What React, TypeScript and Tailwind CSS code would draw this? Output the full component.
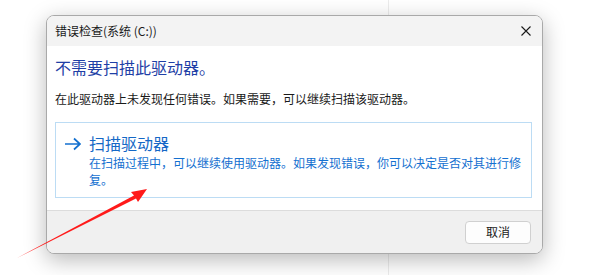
import React from 'react';

const font = { fontFamily: '"Noto Sans CJK SC", "Noto Sans", sans-serif' };

export default function App() {
  return (
    <div className="relative w-[600px] h-[275px] bg-white overflow-hidden" style={font}>
      {/* faint background divider */}
      <div className="absolute left-[388px] top-0 w-px h-full bg-[#ececec]" />

      <div className="relative pl-[46px] pt-[15px]">
        <div className="w-[497px] h-[239px] flex flex-col rounded-[8px] border border-[#a9a9a9] bg-white overflow-hidden shadow-[0_6px_22px_rgba(0,0,0,0.28)]">
          {/* title bar */}
          <div className="h-[30px] flex items-center justify-between bg-[#f3f3f3] pl-[8px] pr-[8px]">
            <span className="text-[12px] text-[#1a1a1a] leading-none">错误检查(系统 (C:))</span>
            <svg width="12" height="12" viewBox="0 0 12 12" className="mr-[2px]">
              <path d="M1.5 1.5 L10.5 10.5 M10.5 1.5 L1.5 10.5" stroke="#1a1a1a" strokeWidth="1.1" />
            </svg>
          </div>

          {/* content */}
          <div className="flex-1 bg-white pl-[8px] pr-[10px] pt-[10px]">
            <div className="text-[16px] leading-[22px] text-[#1f3fa6]">不需要扫描此驱动器。</div>
            <div className="mt-[13px] text-[12px] leading-[16px] text-[#1a1a1a]">
              在此驱动器上未发现任何错误。如果需要，可以继续扫描该驱动器。
            </div>
            <div className="mt-[15px] h-[76px] border border-[#bcdcf4] flex pl-[8px] pt-[9px] pr-[6px]">
              <svg width="18" height="14" viewBox="0 0 18 14" className="mt-[5px] shrink-0">
                <path d="M1 7 H16 M10 1.5 L16 7 L10 12.5" stroke="#1470cf" strokeWidth="1.7" fill="none" />
              </svg>
              <div className="ml-[7px] flex flex-col">
                <div className="text-[16px] leading-[22px] text-[#1468c6]">扫描驱动器</div>
                <div className="text-[12px] leading-[17px] text-[#1470d0] w-[436px]">
                  在扫描过程中，可以继续使用驱动器。如果发现错误，你可以决定是否对其进行修复。
                </div>
              </div>
            </div>
          </div>

          {/* footer */}
          <div className="h-[43px] bg-[#f0f0f0] border-t border-[#dcdcdc] flex items-center justify-end pr-[11px]">
            <button className="w-[66px] h-[23px] rounded-[4px] border border-[#d0d0d0] bg-[#fdfdfd] text-[12px] text-[#1a1a1a] leading-none">
              取消
            </button>
          </div>
        </div>
      </div>

      {/* red annotation arrow */}
      <svg className="absolute left-0 top-0" width="600" height="275" viewBox="0 0 600 275">
        <polygon points="17,258 134,195.5 131,192 147,189 138,202 136,198.5" fill="#ff1a1a" />
      </svg>
    </div>
  );
}
